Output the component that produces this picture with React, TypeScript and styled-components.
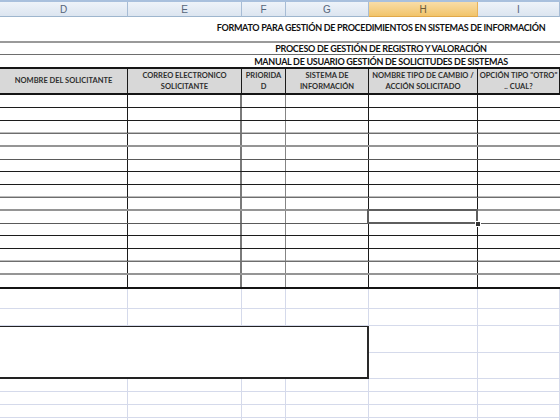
import React from 'react';
import styled, { createGlobalStyle, css } from 'styled-components';

const COLS = '128px 114px 44px 83px 109px 82px';
const FONT = `"Lato", "Liberation Sans", sans-serif`;

const Global = createGlobalStyle`
  html, body { margin: 0; padding: 0; background: #fff; }
  body { width: 560px; height: 420px; overflow: hidden; font-family: ${FONT}; }
  * { box-sizing: border-box; }
`;

const Sheet = styled.div`
  width: 560px;
  height: 420px;
  overflow: hidden;
  display: flex;
  flex-direction: column;
  background: #fff;
`;

const ColumnBar = styled.div`
  display: grid;
  grid-template-columns: ${COLS};
  height: 17px;
  flex: none;
  border-top: 2px solid #a9c0dd;
`;

const ColHead = styled.div<{ $selected?: boolean }>`
  border-right: 1px solid #a7bcd5;
  border-bottom: 1px solid #9eb6ce;
  background: linear-gradient(#eef3f9, #dce5f0);
  font: 400 10px "Liberation Sans", sans-serif;
  color: #55657a;
  display: flex;
  align-items: center;
  justify-content: center;
  ${(p) =>
    p.$selected &&
    css`
      background: linear-gradient(#f9dda8, #f2c46a);
      color: #6a5a3a;
      border-right-color: #e7b25a;
      border-bottom-color: #e0a84a;
    `}
`;

const TitleRow = styled.div<{ $h: number; $line: string; $pb: number }>`
  flex: none;
  height: ${(p) => p.$h}px;
  border-bottom: ${(p) => p.$line};
  display: flex;
  align-items: center;
  justify-content: center;
  padding-left: 202px;
  padding-bottom: ${(p) => p.$pb}px;
`;

const TitleText = styled.span`
  font-weight: 700;
  font-size: 9px;
  letter-spacing: -0.3px;
  color: #111;
  white-space: nowrap;
`;

const HeadRow = styled.div`
  flex: none;
  display: grid;
  grid-template-columns: ${COLS};
  height: 26px;
  border-bottom: 2px solid #151515;
`;

const HeadCell = styled.div`
  background: #d8d8d8;
  border-right: 1px solid #1a1a1a;
  display: flex;
  align-items: center;
  justify-content: center;
  text-align: center;
  font-weight: 700;
  font-size: 7.5px;
  line-height: 10.5px;
  color: #2e2e2e;
  padding-top: 1px;
`;

type Line = 'black' | 'gray' | 'thick' | 'dgray' | 'end';
const LINES: Record<Line, ReturnType<typeof css>> = {
  black: css`border-bottom: 1px solid #1c1c1c;`,
  gray: css`border-bottom: 1px solid #6e6e6e; box-shadow: inset 0 -1px 0 #bdbdbd;`,
  thick: css`border-bottom: 2px solid #959595;`,
  dgray: css`border-bottom: 1px solid #5a5a5a;`,
  end: css`border-bottom: 2px solid #141414;`,
};

const DataRow = styled.div<{ $h: number; $line: Line }>`
  flex: none;
  display: grid;
  grid-template-columns: ${COLS};
  height: ${(p) => p.$h}px;
  ${(p) => LINES[p.$line]}
`;

type VLine = 'black' | 'gray' | 'mid' | 'none';
const VLINES: Record<VLine, string> = {
  black: '1px solid #1c1c1c',
  gray: '2px solid #7a7a7a',
  mid: '1px solid #858585',
  none: '0',
};

const Cell = styled.div<{ $v: VLine; $selected?: boolean }>`
  border-right: ${(p) => VLINES[p.$v]};
  position: relative;
  ${(p) =>
    p.$selected &&
    css`
      &::after {
        content: '';
        position: absolute;
        left: -2px;
        top: -2px;
        right: -1px;
        bottom: -1px;
        border: 2px solid #5e5e5e;
        z-index: 2;
      }
    `}
`;

const FillHandle = styled.span`
  position: absolute;
  right: -4px;
  bottom: -4px;
  width: 6px;
  height: 6px;
  background: #333;
  border: 1px solid #fff;
  z-index: 3;
`;

const BelowGrid = styled.div`
  flex: none;
  display: grid;
  grid-template-columns: ${COLS};
  grid-template-rows: 20px 17px 27px 26px 13px 13px 13px 13px;
`;

const GridCell = styled.div`
  border-right: 1px solid #d5daeb;
  border-bottom: 1px solid #d5daeb;
`;

const NoteBox = styled.div`
  grid-column: 1 / 5;
  grid-row: 3 / 5;
  margin-top: -1px;
  background: #fff;
  border-top: 2px solid #222;
  border-right: 2px solid #2a2a2a;
  border-bottom: 2px solid #222;
`;

const COL_LETTERS = ['D', 'E', 'F', 'G', 'H', 'I'];
const HEADERS: React.ReactNode[] = [
  'NOMBRE DEL SOLICITANTE',
  <>CORREO ELECTRONICO<br />SOLICITANTE</>,
  <>PRIORIDA<br />D</>,
  <>SISTEMA DE<br />INFORMACIÓN</>,
  <>NOMBRE TIPO DE CAMBIO /<br />ACCIÓN SOLICITADO</>,
  <>OPCIÓN TIPO "OTRO"<br />.. CUAL?</>,
];
const VCOLS: VLine[] = ['black', 'gray', 'mid', 'black', 'black', 'none'];
const ROW_LINES: Line[] = [
  'black', 'black', 'gray', 'thick', 'dgray', 'black', 'black', 'gray',
  'thick', 'dgray', 'black', 'black', 'gray', 'thick', 'end',
];
const ROW_HEIGHTS = [13, 13, 13, 13, 13, 12, 13, 13, 13, 13, 12, 13, 13, 13, 14];
const SELECTED_ROW = 9;
const SELECTED_COL = 4;

export default function App() {
  return (
    <Sheet>
      <Global />
      <ColumnBar>
        {COL_LETTERS.map((c) => (
          <ColHead key={c} $selected={c === 'H'}>{c}</ColHead>
        ))}
      </ColumnBar>
      <TitleRow $h={26} $line="2px solid #9a9a9a" $pb={3}>
        <TitleText>FORMATO PARA GESTIÓN DE PROCEDIMIENTOS EN SISTEMAS DE INFORMACIÓN</TitleText>
      </TitleRow>
      <TitleRow $h={12} $line="1px solid #6e6e6e" $pb={0}>
        <TitleText>PROCESO DE GESTIÓN DE REGISTRO Y VALORACIÓN</TitleText>
      </TitleRow>
      <TitleRow $h={14} $line="2px solid #161616" $pb={0}>
        <TitleText>MANUAL DE USUARIO GESTIÓN DE SOLICITUDES DE SISTEMAS</TitleText>
      </TitleRow>
      <HeadRow>
        {HEADERS.map((h, i) => (
          <HeadCell key={i}>
            <span>{h}</span>
          </HeadCell>
        ))}
      </HeadRow>
      {ROW_LINES.map((line, r) => (
        <DataRow key={r} $h={ROW_HEIGHTS[r]} $line={line}>
          {VCOLS.map((v, c) => {
            const sel = r === SELECTED_ROW && c === SELECTED_COL;
            return (
              <Cell key={c} $v={v} $selected={sel}>
                {sel && <FillHandle />}
              </Cell>
            );
          })}
        </DataRow>
      ))}
      <BelowGrid>
        <NoteBox />
        {Array.from({ length: 40 }).map((_, i) => (
          <GridCell key={i} />
        ))}
      </BelowGrid>
    </Sheet>
  );
}
